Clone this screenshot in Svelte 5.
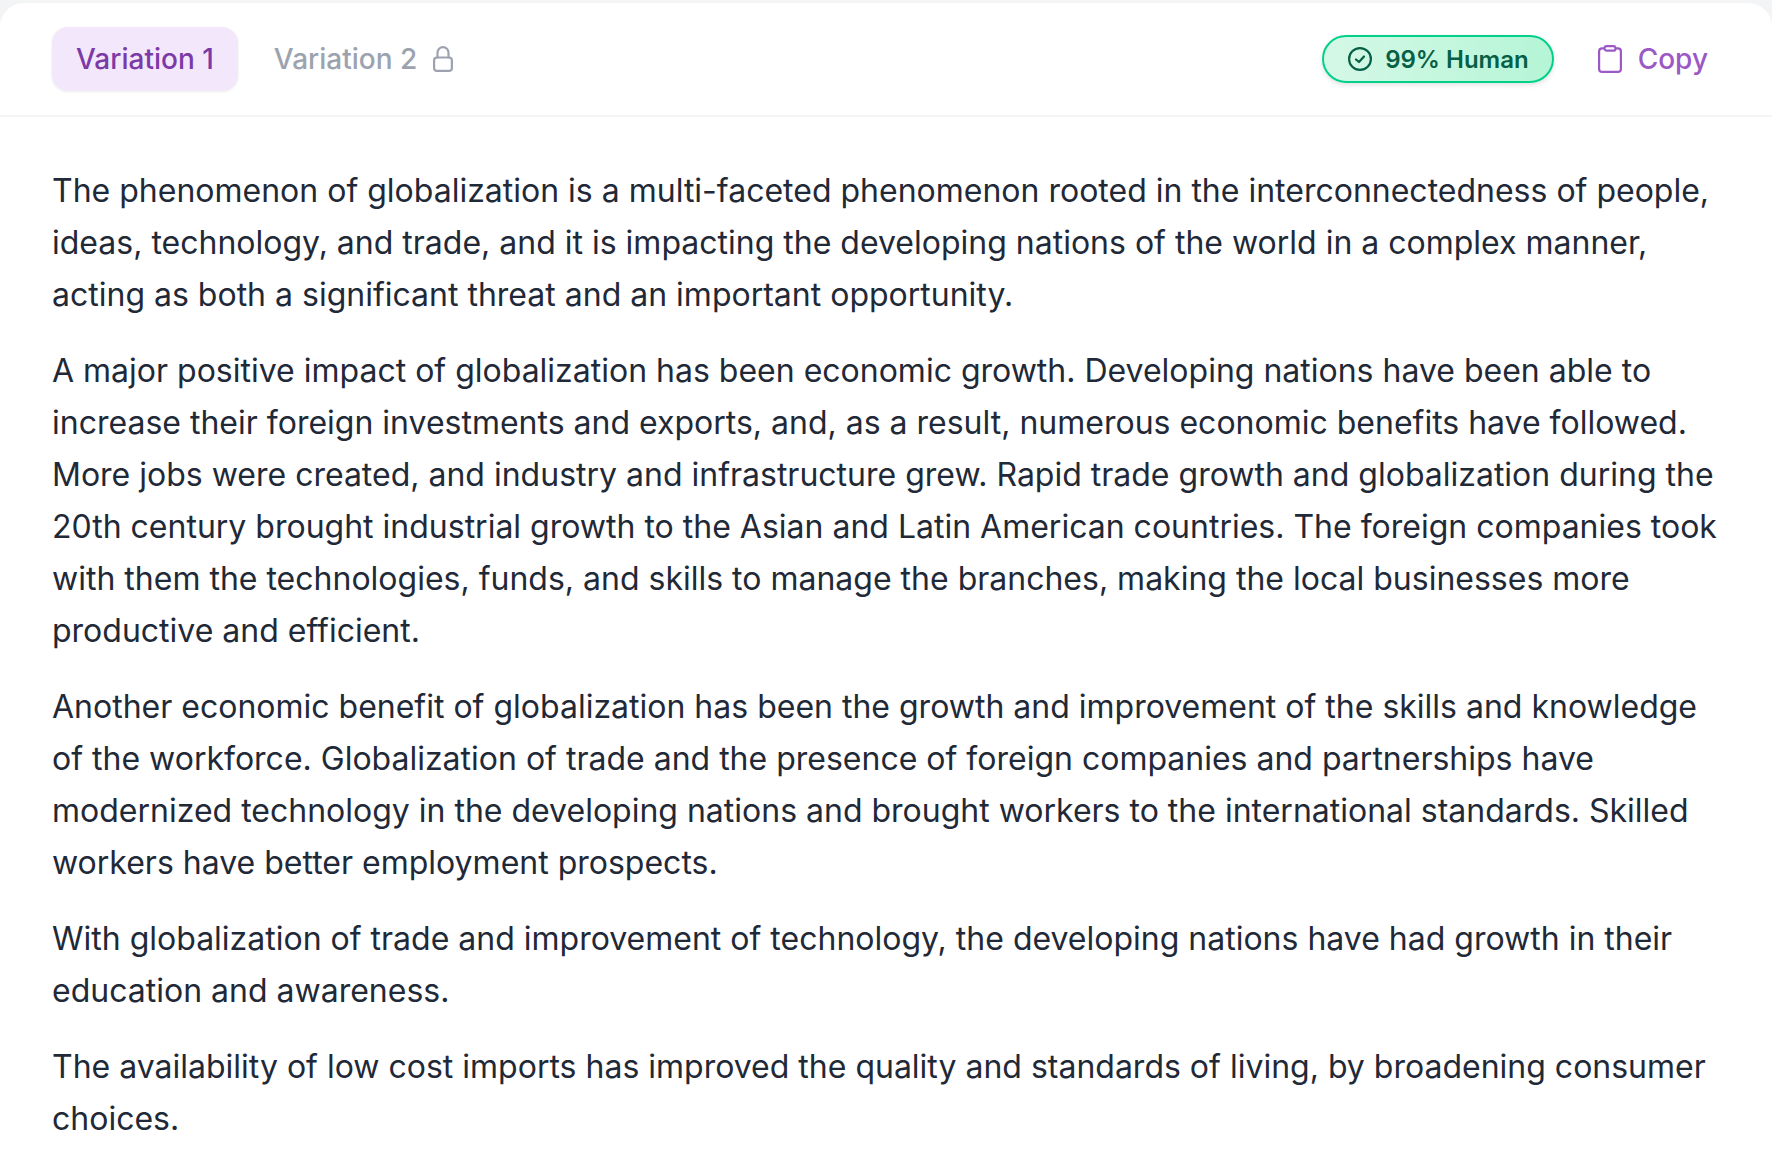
<script>
  const paragraphs = [
    "The phenomenon of globalization is a multi-faceted phenomenon rooted in the interconnectedness of people, ideas, technology, and trade, and it is impacting the developing nations of the world in a complex manner, acting as both a significant threat and an important opportunity.",
    "A major positive impact of globalization has been economic growth. Developing nations have been able to increase their foreign investments and exports, and, as a result, numerous economic benefits have followed. More jobs were created, and industry and infrastructure grew. Rapid trade growth and globalization during the 20th century brought industrial growth to the Asian and Latin American countries. The foreign companies took with them the technologies, funds, and skills to manage the branches, making the local businesses more productive and efficient.",
    "Another economic benefit of globalization has been the growth and improvement of the skills and knowledge of the workforce. Globalization of trade and the presence of foreign companies and partnerships have modernized technology in the developing nations and brought workers to the international standards. Skilled workers have better employment prospects.",
    "With globalization of trade and improvement of technology, the developing nations have had growth in their education and awareness.",
    "The availability of low cost imports has improved the quality and standards of living, by broadening consumer choices."
  ];
</script>

<div class="card">
  <header class="bar">
    <div class="tabs">
      <div class="tab active">Variation 1</div>
      <div class="tab locked">
        Variation 2
        <svg class="lock" viewBox="0 0 20 26" fill="none" stroke="currentColor" stroke-width="2.2" stroke-linecap="round" stroke-linejoin="round">
          <rect x="1.1" y="11.5" width="17.8" height="13.4" rx="3" />
          <path d="M4.5 11.5V6.6a5.5 5.5 0 0 1 11 0v4.9" />
        </svg>
      </div>
    </div>
    <div class="actions">
      <div class="score">
        <svg class="check" viewBox="0 0 24 24" fill="none" stroke="currentColor" stroke-width="2.2" stroke-linecap="round" stroke-linejoin="round">
          <circle cx="12" cy="12" r="10.9" />
          <path d="M8 12.5l3 2.5 5-5.5" />
        </svg>
        99% Human
      </div>
      <div class="copy">
        <svg class="clip" viewBox="0 0 24 28" fill="none" stroke="currentColor" stroke-width="2.2" stroke-linecap="round" stroke-linejoin="round">
          <rect x="1.1" y="3.4" width="21.8" height="23.5" rx="3" />
          <rect x="6.5" y="1.1" width="11" height="4.6" rx="2.3" fill="#fff" />
        </svg>
        Copy
      </div>
    </div>
  </header>
  <main class="body">
    {#each paragraphs as p}
      <p>{p}</p>
    {/each}
  </main>
</div>

<style>
  :global(body) {
    background: #f3f4f6;
    font-family: Inter, "Liberation Sans", sans-serif;
  }
  .card {
    margin-top: 3px;
    min-height: 1171px;
    background: #fff;
    border-radius: 24px 24px 0 0;
  }
  .bar {
    display: flex;
    justify-content: space-between;
    align-items: center;
    height: 112px;
    padding: 0 52px;
    border-bottom: 2px solid #f3f4f6;
  }
  .tabs, .actions {
    display: flex;
    align-items: center;
  }
  .tabs {
    gap: 12px;
  }
  .tab {
    display: flex;
    align-items: center;
    gap: 16px;
    height: 64px;
    padding: 0 24px;
    border-radius: 16px;
    font-size: 28px;
    font-weight: 500;
  }
  .active {
    background: #f3e8fb;
    color: #7c3aa6;
    box-shadow: 0 1px 3px rgba(0, 0, 0, 0.08);
  }
  .locked {
    color: #9ca3af;
  }
  .lock {
    width: 20px;
    height: 26px;
  }
  .score {
    display: flex;
    align-items: center;
    gap: 13px;
    height: 48px;
    box-sizing: border-box;
    padding: 0 23px 0 24px;
    border: 2px solid #00d08a;
    border-radius: 24px;
    background: linear-gradient(90deg, #d5f8e6, #b5f5d6);
    box-shadow: 0 2px 5px rgba(0, 0, 0, 0.12);
    color: #065f46;
    font-size: 24px;
    font-weight: 600;
  }
  .check {
    width: 24px;
    height: 24px;
  }
  .copy {
    display: flex;
    align-items: center;
    gap: 16px;
    margin-left: 44px;
    margin-right: 12px;
    color: #9b59c5;
    font-size: 28px;
    font-weight: 500;
  }
  .clip {
    width: 24px;
    height: 28px;
  }
  .body {
    padding: 48px 52px 0;
  }
  p {
    margin: 0 0 24px;
    font-size: 32px;
    line-height: 52px;
    color: #1f2937;
  }
</style>
